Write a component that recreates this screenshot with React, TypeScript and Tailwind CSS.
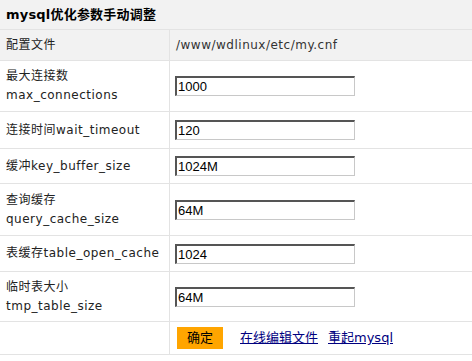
import React from "react";

type Row = {
  zh: string;
  en?: string;
  inline?: boolean;
  value: string;
  h: string;
};

const rows: Row[] = [
  { zh: "最大连接数", en: "max_connections", value: "1000", h: "h-[51px]" },
  { zh: "连接时间", en: "wait_timeout", inline: true, value: "120", h: "h-[37px]" },
  { zh: "缓冲", en: "key_buffer_size", inline: true, value: "1024M", h: "h-[35px]" },
  { zh: "查询缓存", en: "query_cache_size", value: "64M", h: "h-[52px]" },
  { zh: "表缓存", en: "table_open_cache", inline: true, value: "1024", h: "h-[36px]" },
  { zh: "临时表大小", en: "tmp_table_size", value: "64M", h: "h-[50px]" },
];

const font = "font-['DejaVu_Sans','Noto_Sans_CJK_SC',sans-serif]";

function Field({ value }: { value: string }) {
  return (
    <input
      type="text"
      defaultValue={value}
      className="ml-[-1px] h-[20px] w-[180px] border-t-2 border-l-2 border-r border-b border-t-[#555] border-l-[#555] border-r-[#c8c8c8] border-b-[#c8c8c8] bg-white px-[1px] font-['Liberation_Sans',sans-serif] text-[13px] tracking-normal text-black outline-none"
    />
  );
}

export default function App() {
  return (
    <div className={`w-[472px] bg-white text-[12px] tracking-[0.5px] text-[#222] ${font}`}>
      <div className="flex h-[30px] items-center border-b border-[#e3e3e3] bg-[#f2f2f2] px-[6px] text-[13px] font-bold tracking-[0.2px] text-black">
        mysql优化参数手动调整
      </div>

      <div className="grid h-[31px] grid-cols-[170px_1fr] border-b border-[#e3e3e3] bg-[#f2f2f2]">
        <div className="flex items-center border-r border-[#e3e3e3] px-[6px]">配置文件</div>
        <div className="flex items-center px-[6px] text-[#333]">/www/wdlinux/etc/my.cnf</div>
      </div>

      {rows.map((r) => (
        <div key={r.en} className={`grid ${r.h} grid-cols-[170px_1fr] border-b border-[#e3e3e3]`}>
          <div className="flex items-center border-r border-[#e3e3e3] px-[6px] leading-[19px]">
            {r.inline ? (
              <span>
                {r.zh}
                {r.en}
              </span>
            ) : (
              <span className="flex flex-col">
                <span>{r.zh}</span>
                <span>{r.en}</span>
              </span>
            )}
          </div>
          <div className="flex items-center px-[6px]">
            <Field value={r.value} />
          </div>
        </div>
      ))}

      <div className="grid h-[33px] grid-cols-[170px_1fr] border-b border-[#e3e3e3]">
        <div className="border-r border-[#e3e3e3]"></div>
        <div className="flex items-center pl-[7px] text-[13px] tracking-normal">
          <button className="h-[22px] w-[46px] bg-[#ffa500] text-[13px] text-black">确定</button>
          <a href="#" className="ml-[17px] text-[#00007f] underline">
            在线编辑文件
          </a>
          <a href="#" className="ml-[10px] text-[#00007f] underline">
            重起mysql
          </a>
        </div>
      </div>
    </div>
  );
}
